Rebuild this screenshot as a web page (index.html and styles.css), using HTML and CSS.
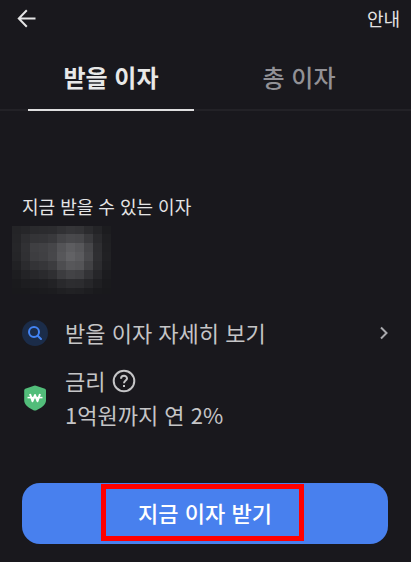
FILE: index.html
```html
<!DOCTYPE html>
<html lang="ko">
<head>
<meta charset="utf-8">
<meta name="viewport" content="width=device-width, initial-scale=1">
<title>받을 이자</title>
<link rel="stylesheet" href="styles.css">
</head>
<body>
<header class="topbar">
  <button class="back" type="button" aria-label="뒤로">
    <svg width="20" height="20" viewBox="0 0 20 20" fill="none" stroke="currentColor" stroke-width="2"><path d="M18.500 10.500H2M9.800 2.300L1.800 10.500L9.800 18.700"/></svg>
  </button>
  <a class="guide" href="#guide">안내</a>
</header>
<nav class="tabs">
  <a class="tab active" href="#now" aria-current="page">받을 이자</a>
  <a class="tab" href="#total">총 이자</a>
</nav>
<main>
  <section class="amount">
    <h1>지금 받을 수 있는 이자</h1>
    <svg class="mosaic" width="99" height="68" viewBox="0 0 99 68" shape-rendering="crispEdges" aria-hidden="true"></svg>
  </section>
  <a class="row detail" href="#detail">
    <svg class="icon" width="26" height="26" viewBox="0 0 26 26" fill="none"><circle cx="13" cy="13" r="13" fill="#1b2c49"/><circle cx="12" cy="12" r="5" stroke="#4384f4" stroke-width="2"/><path d="M15.700 15.700L19 19" stroke="#4384f4" stroke-width="2" stroke-linecap="round"/></svg>
    <span class="label">받을 이자 자세히 보기</span>
    <svg class="chevron" width="8" height="14" viewBox="0 0 8 14" fill="none" stroke="#a9a9ad" stroke-width="2"><path d="M1 1.500L6.500 7L1 12.500"/></svg>
  </a>
  <section class="row rate">
    <svg class="icon" width="26" height="26" viewBox="0 0 26 26"><path d="M12 .7Q13 .2 14 .7L23 3.800Q24 4.300 24 5.300V15.500C24 20 19 23 14 25.400Q13 25.800 12 25.400C7 23 2.200 20 2.200 15.500V5.300Q2.200 4.300 3.200 3.800Z" fill="#52bd7a"/><path d="M5.500 12.600H20.500" stroke="#fff" stroke-width="1.500"/><path d="M8 9L10.500 16.200L13 10L15.500 16.200L18 9" fill="none" stroke="#fff" stroke-width="2" stroke-linejoin="round"/></svg>
    <div class="label">
      <div class="rate-title">금리
        <button class="help" type="button" aria-label="금리 도움말"><svg width="24" height="24" viewBox="0 0 24 24" fill="none" stroke="currentColor" stroke-width="2"><circle cx="12" cy="12" r="10.300"/><path d="M9 9.700C9 5.900 15 5.900 15 9.500C15 11.700 12 11.500 12 14.300M12 16V18"/></svg></button>
      </div>
      <div>1억원까지 연 2%</div>
    </div>
  </section>
  <button class="cta" type="button">지금 이자 받기<span class="highlight"></span></button>
</main>
<script src="mosaic.js"></script>
</body>
</html>
```
FILE: styles.css
```css
* { box-sizing: border-box; }
body {
  margin: 0;
  background: #19181d;
  color: #e4e4e5;
  font-family: "Noto Sans CJK KR", sans-serif;
}
a { color: inherit; text-decoration: none; }
button {
  padding: 0;
  border: 0;
  background: none;
  color: inherit;
  font: inherit;
}
svg { display: block; flex: none; }
.topbar {
  display: flex;
  align-items: center;
  justify-content: space-between;
  height: 36px;
  padding: 0 11px 0 17px;
}
.guide { font-size: 18px; line-height: 28px; }
.tabs {
  display: grid;
  grid-template-columns: 1fr 1fr;
  gap: 22px;
  margin-top: 10px;
  padding: 0 29px 0 28px;
  box-shadow: inset 0 -2px #232227;
}
.tab {
  height: 65px;
  color: #929196;
  border-bottom: 2px solid transparent;
  font-size: 24px;
  font-weight: 500;
  line-height: 62px;
  text-align: center;
}
.active {
  border-color: #dededf;
  color: #e8e8e8;
  font-weight: 700;
}
main { padding: 79px 23px 18px 22px; }
h1 {
  margin: 0;
  font-size: 18px;
  font-weight: 400;
  line-height: 32px;
}
.mosaic { margin: 4px 0 0 -10px; }
.row {
  display: flex;
  align-items: center;
  color: #c5c5c7;
  font-size: 22px;
  line-height: 34px;
}
.label { flex: 1; margin-left: 17px; padding-bottom: 2px; }
.detail { margin-top: 21px; }
.rate { margin-top: 12px; }
.rate-title { display: flex; align-items: center; gap: 7px; }
.help { padding-top: 1px; }
.cta {
  position: relative;
  display: block;
  width: 100%;
  height: 61px;
  margin-top: 50px;
  padding-bottom: 4px;
  border-radius: 18px;
  background: #4880ee;
  color: #fff;
  font-size: 22px;
  font-weight: 500;
}
.highlight {
  position: absolute;
  top: 1px;
  bottom: 3px;
  left: 50%;
  width: 203px;
  margin-left: -104px;
  border: 5px solid #f00;
}
```
FILE: mosaic.js
```js
// Grey level of each block that hides the amount, row by row.
const levels = [
  [36, 38, 42, 43, 44, 49, 53, 51, 43, 36, 28],
  [37, 46, 52, 53, 57, 68, 73, 71, 58, 42, 31],
  [38, 49, 63, 65, 70, 84, 93, 87, 70, 46, 32],
  [37, 48, 61, 64, 71, 87, 98, 91, 73, 47, 33],
  [33, 43, 51, 54, 60, 77, 87, 84, 65, 44, 31],
  [29, 35, 39, 42, 47, 60, 67, 64, 51, 38, 28],
  [26, 29, 30, 31, 34, 41, 45, 44, 38, 31, 26],
  [25, 25, 26, 27, 28, 31, 33, 32, 29, 26, 25]
];
const mosaic = document.querySelector(".mosaic");
levels.forEach((row, r) => row.forEach((level, c) => {
  const block = document.createElementNS("http://www.w3.org/2000/svg", "rect");
  block.setAttribute("x", c * 9);
  block.setAttribute("y", Math.max(0, r * 9 - 1));
  block.setAttribute("width", 9);
  block.setAttribute("height", r === 0 ? 8 : 9);
  block.setAttribute("fill", `rgb(${level}, ${level}, ${level + 3})`);
  mosaic.append(block);
}));
```
